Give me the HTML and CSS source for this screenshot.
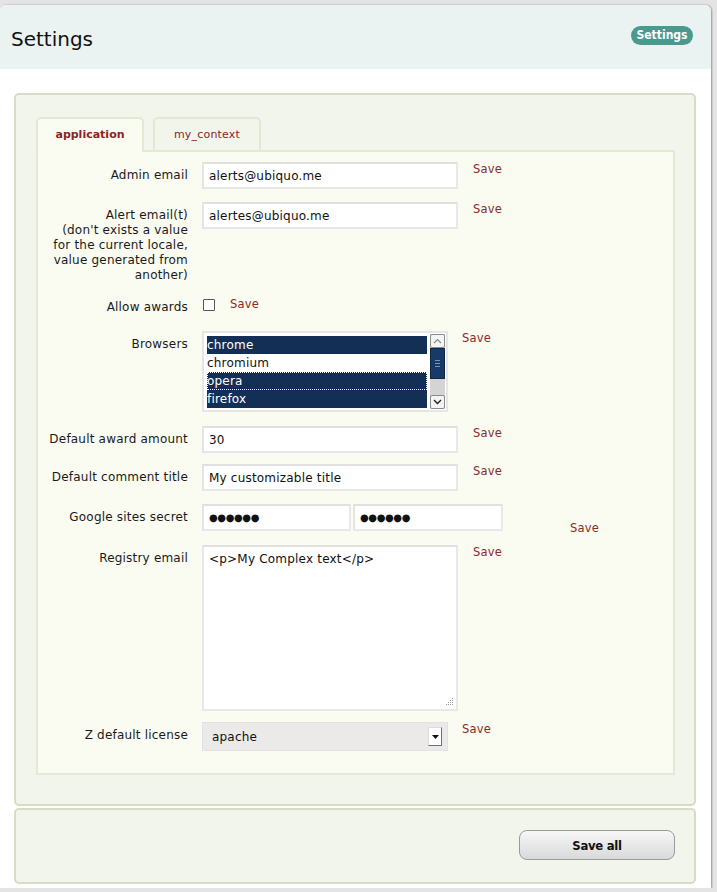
FILE: index.html
```html
<!DOCTYPE html>
<html>
<head>
<meta charset="utf-8">
<title>Settings</title>
<link rel="stylesheet" href="styles.css">
</head>
<body>
<div class="page">
  <header class="header">
    <h1 class="title">Settings</h1>
    <span class="badge">Settings</span>
  </header>

  <section class="panel">
    <nav class="tabs">
      <a class="tab tab--active">application</a>
      <a class="tab">my_context</a>
    </nav>
    <div class="tab-body">
      <div class="row">
        <label class="label">Admin email</label>
        <input class="field" type="text" value="alerts@ubiquo.me">
        <a class="save">Save</a>
      </div>
      <div class="row row--g13">
        <label class="label">Alert email(t)<br>(don't exists a value for the current locale, value generated from another)</label>
        <input class="field" type="text" value="alertes@ubiquo.me">
        <a class="save">Save</a>
      </div>
      <div class="row row--g11">
        <label class="label">Allow awards</label>
        <input class="check" type="checkbox">
        <a class="save save--check">Save</a>
      </div>
      <div class="row row--g16">
        <label class="label">Browsers</label>
        <div class="listbox">
          <ul class="options">
            <li class="opt opt--sel">chrome</li>
            <li class="opt">chromium</li>
            <li class="opt opt--sel opt--focus">opera</li>
            <li class="opt opt--sel">firefox</li>
          </ul>
          <div class="scroll">
            <div class="sbtn"><svg width="9" height="6" viewBox="0 0 9 6"><path d="M1 5 L4.5 1.5 L8 5" fill="none" stroke="#888" stroke-width="1.2"/></svg></div>
            <div class="thumb"><span class="grip"></span></div>
            <div class="track"></div>
            <div class="sbtn"><svg width="9" height="6" viewBox="0 0 9 6"><path d="M1 1 L4.5 4.5 L8 1" fill="none" stroke="#222" stroke-width="1.4"/></svg></div>
          </div>
        </div>
        <a class="save save--narrow">Save</a>
      </div>
      <div class="row row--g14">
        <label class="label">Default award amount</label>
        <input class="field" type="text" value="30">
        <a class="save">Save</a>
      </div>
      <div class="row row--g11">
        <label class="label">Default comment title</label>
        <input class="field" type="text" value="My customizable title">
        <a class="save">Save</a>
      </div>
      <div class="row row--g13">
        <label class="label">Google sites secret</label>
        <div class="pw-pair">
          <input class="field field--pw" type="text" value="●●●●●●">
          <input class="field field--pw" type="text" value="●●●●●●">
        </div>
        <a class="save save--pw">Save</a>
      </div>
      <div class="row row--g14">
        <label class="label">Registry email</label>
        <div class="textarea">&lt;p&gt;My Complex text&lt;/p&gt;<svg class="resize" width="9" height="9" viewBox="0 0 9 9"><g fill="#9a9a9a"><rect x="7" y="1" width="1" height="1"/><rect x="5" y="3" width="1" height="1"/><rect x="7" y="3" width="1" height="1"/><rect x="3" y="5" width="1" height="1"/><rect x="5" y="5" width="1" height="1"/><rect x="7" y="5" width="1" height="1"/><rect x="1" y="7" width="1" height="1"/><rect x="3" y="7" width="1" height="1"/><rect x="5" y="7" width="1" height="1"/><rect x="7" y="7" width="1" height="1"/></g></svg></div>
        <a class="save">Save</a>
      </div>
      <div class="row row--g11">
        <label class="label">Z default license</label>
        <div class="select">
          <span class="select-val">apache</span>
          <span class="select-btn"><svg width="7" height="4" viewBox="0 0 7 4"><path d="M0 0 H7 L3.5 4 Z" fill="#111"/></svg></span>
        </div>
        <a class="save save--narrow">Save</a>
      </div>
    </div>
  </section>

  <section class="panel panel--actions">
    <button class="save-all" type="button">Save all</button>
  </section>
</div>
</body>
</html>
```

FILE: styles.css
```css
* { box-sizing: border-box; }

html, body {
  margin: 0;
  padding: 0;
  background: #e4e4e4;
}

body {
  font-family: "DejaVu Sans", Verdana, sans-serif;
  font-size: 12px;
  letter-spacing: 0.2px;
  color: #1a1a1a;
}

.page {
  width: 711px;
  height: 883px;
  margin-top: 5px;
  background: #fff;
  border-radius: 6px 6px 0 0;
  box-shadow: 1px 0 2px rgba(0, 0, 0, 0.35);
  overflow: hidden;
}

.header {
  height: 64px;
  background: #eaf3f2;
  display: flex;
  justify-content: space-between;
  align-items: flex-start;
  padding: 0 18px 0 11px;
}

.title {
  margin: 22px 0 0;
  font-size: 20px;
  font-weight: normal;
  letter-spacing: 0;
  line-height: 24px;
  color: #111;
}

.badge {
  margin-top: 21px;
  height: 19px;
  width: 62px;
  border-radius: 10px;
  background: #4a998e;
  color: #fff;
  font-family: "DejaVu Sans Condensed", "DejaVu Sans", sans-serif;
  font-stretch: condensed;
  font-weight: bold;
  font-size: 12px;
  letter-spacing: 0;
  line-height: 19px;
  text-align: center;
}

.panel {
  margin: 24px 0 0 14px;
  width: 682px;
  background: #f2f5ec;
  border: 2px solid #d7dcc6;
  border-radius: 5px;
  padding: 22px 19px 29px 20px;
}

.tabs {
  display: flex;
  align-items: flex-end;
  gap: 9px;
}

.tab {
  width: 108px;
  height: 33px;
  border: 2px solid #e3e8d3;
  border-bottom: none;
  border-radius: 5px 5px 0 0;
  background: #f2f5eb;
  color: #8c2424;
  text-align: center;
  padding-top: 8px;
  font-size: 11px;
  line-height: 16px;
}

.tab--active {
  height: 35px;
  margin-bottom: -2px;
  background: #fafcf2;
  font-weight: bold;
  letter-spacing: 0;
  position: relative;
}

.tab-body {
  background: #fafcf2;
  border: 2px solid #e4e9d4;
  padding: 10px 0 22px;
}

.row {
  display: flex;
  align-items: flex-start;
}

.row--g11 { margin-top: 11px; }
.row--g13 { margin-top: 13px; }
.row--g14 { margin-top: 14px; }
.row--g16 { margin-top: 16px; }

.label {
  width: 150px;
  flex: none;
  margin-right: 14px;
  padding: 6px 0 0 8px;
  text-align: right;
  line-height: 15px;
  color: #1a1a1a;
}

.field {
  width: 256px;
  height: 27px;
  margin: 0;
  padding: 0 5px;
  border: 2px solid #e8e8e8;
  border-top-color: #e0e0e0;
  border-left-color: #e4e4e4;
  background: #fff;
  font-family: "DejaVu Sans", Verdana, sans-serif;
  font-size: 12px;
  letter-spacing: 0.2px;
  color: #111;
  outline: none;
}

.save {
  margin-left: 15px;
  font-size: 11.5px;
  line-height: 14px;
  color: #8c2a2a;
  cursor: pointer;
}

.save--narrow { margin-left: 14px; }

.save--check { margin-left: 15px; margin-top: 3px; }

.check {
  appearance: none;
  -webkit-appearance: none;
  width: 12px;
  height: 12px;
  margin: 5px 0 0 1px;
  border: 1px solid #555;
  border-radius: 1px;
  background: #fff;
}

.listbox {
  width: 246px;
  height: 81px;
  border: 2px solid #e6e6e6;
  padding: 3px 1px 3px 3px;
  display: flex;
  gap: 3px;
  background: #fff;
}

.options {
  list-style: none;
  margin: 0;
  padding: 0;
  flex: 1;
}

.opt {
  height: 18px;
  line-height: 18px;
  color: #111;
  white-space: nowrap;
}

.opt--sel {
  background: #142f55;
  color: #fff;
}

.opt--focus {
  outline: 1px dotted #fff;
  outline-offset: -1px;
}

.scroll {
  width: 15px;
  margin-top: -2px;
  margin-bottom: -2px;
  display: flex;
  flex-direction: column;
  background: #d4d4d4;
}

.sbtn {
  height: 14px;
  border: 1px solid #8a8a8a;
  border-radius: 2px;
  background: #f4f4f4;
  display: flex;
  align-items: center;
  justify-content: center;
}

.thumb {
  height: 31px;
  background: #173a68;
  border: 1px solid #0f2848;
  display: flex;
  align-items: center;
  justify-content: center;
}

.grip {
  width: 5px;
  height: 7px;
  border-top: 1px solid #7c93b3;
  border-bottom: 1px solid #7c93b3;
  position: relative;
}

.grip::after {
  content: "";
  position: absolute;
  left: 0;
  right: 0;
  top: 2px;
  border-top: 1px solid #7c93b3;
}

.track { flex: 1; }

.pw-pair {
  display: flex;
  gap: 2px;
}

.field--pw {
  width: 149px;
  font-size: 10px;
  letter-spacing: -0.4px;
}

.pw-pair .field--pw + .field--pw { width: 150px; }

.save--pw {
  margin-left: 67px;
  margin-top: 17px;
  margin-bottom: -4px;
}

.textarea {
  width: 256px;
  height: 166px;
  border: 2px solid #e8e8e8;
  border-top-color: #e0e0e0;
  background: #fff;
  padding: 5px 5px;
  line-height: 15px;
  color: #111;
  position: relative;
}

.resize {
  position: absolute;
  right: 2px;
  bottom: 3px;
}

.select {
  width: 246px;
  height: 29px;
  background: #ebeae9;
  border: 1px solid #e2e2e2;
  display: flex;
  align-items: center;
  justify-content: space-between;
  padding: 0 5px 0 9px;
  color: #111;
}

.select-btn {
  width: 14px;
  height: 19px;
  background: #fff;
  border: 1px solid #dcdcdc;
  border-right-color: #6e6e6e;
  border-bottom-color: #6e6e6e;
  display: flex;
  align-items: center;
  justify-content: center;
}

.panel--actions {
  margin-top: 2px;
  height: 76px;
  padding: 20px 19px 0 0;
  display: flex;
  justify-content: flex-end;
  align-items: flex-start;
}

.save-all {
  width: 156px;
  height: 30px;
  border: 1px solid #9a9a9a;
  border-radius: 8px;
  background: linear-gradient(#f7f7f7, #d9d9d9);
  font-family: "DejaVu Sans Condensed", "DejaVu Sans", sans-serif;
  font-stretch: condensed;
  font-weight: bold;
  font-size: 13px;
  letter-spacing: -0.3px;
  color: #111;
  padding: 0;
}
```
